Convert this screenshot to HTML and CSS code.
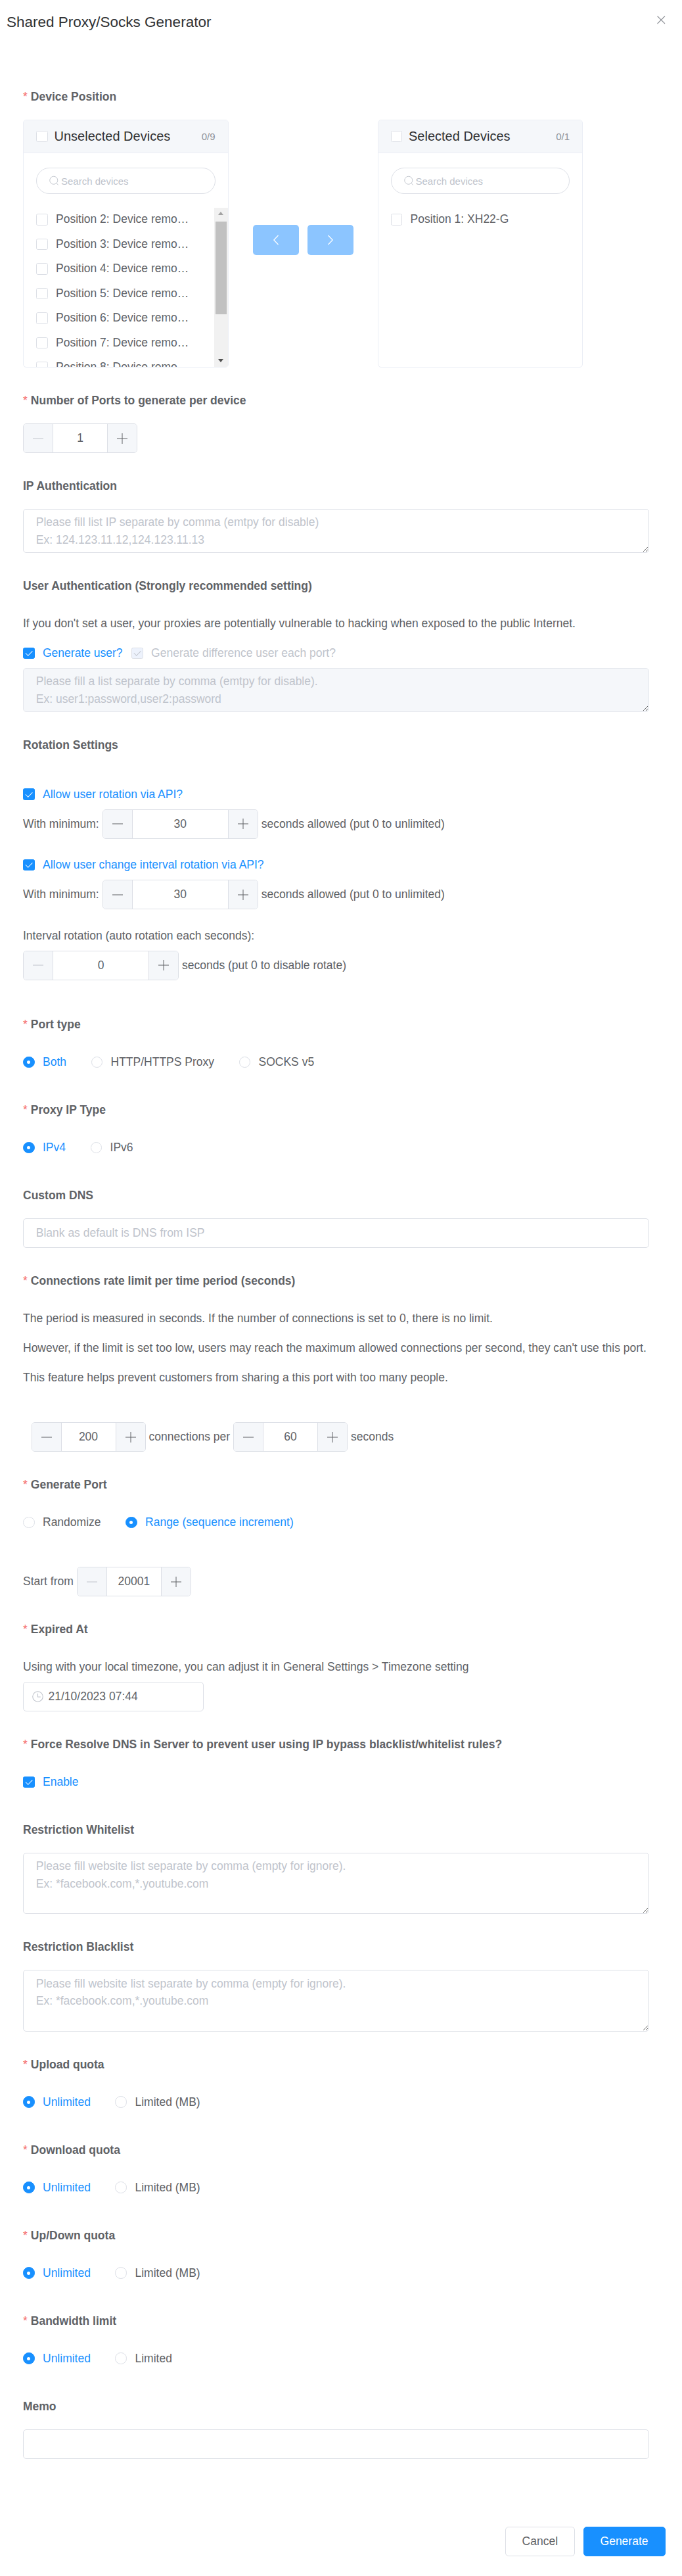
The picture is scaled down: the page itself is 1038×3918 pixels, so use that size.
FILE: index.html
```html
<!DOCTYPE html>
<html lang="en">
<head>
<meta charset="utf-8">
<title>Shared Proxy/Socks Generator</title>
<link rel="stylesheet" href="styles.css">
</head>
<body>
<div class="dialog">
  <header class="head">
    <h1 class="title">Shared Proxy/Socks Generator</h1>
    <svg class="close" viewBox="0 0 12.5 12.5"><path d="M.5.5l11.5 11.5M12 .5.5 12"/></svg>
  </header>
  <form class="form">
    <div class="item">
      <label class="lab req">Device Position</label>
      <div class="transfer">
        <div class="panel">
          <div class="p-head"><span class="cb"></span><span class="p-title">Unselected Devices</span><span class="p-count">0/9</span></div>
          <div class="search"><svg class="s-ico" viewBox="0 0 16 16"><circle cx="7.2" cy="7.2" r="6.4"/><path d="m12 12 2.6 3"/></svg><input placeholder="Search devices"></div>
          <div class="list">
            <div class="li"><span class="cb"></span><span class="li-t">Position 2: Device removed</span></div>
            <div class="li"><span class="cb"></span><span class="li-t">Position 3: Device removed</span></div>
            <div class="li"><span class="cb"></span><span class="li-t">Position 4: Device removed</span></div>
            <div class="li"><span class="cb"></span><span class="li-t">Position 5: Device removed</span></div>
            <div class="li"><span class="cb"></span><span class="li-t">Position 6: Device removed</span></div>
            <div class="li"><span class="cb"></span><span class="li-t">Position 7: Device removed</span></div>
            <div class="li"><span class="cb"></span><span class="li-t">Position 8: Device removed</span></div>
            <div class="sbar"><i class="up"></i><b class="thumb"></b><i class="down"></i></div>
          </div>
        </div>
        <div class="t-btns">
          <button type="button" class="t-btn"><svg viewBox="0 0 12 20"><path d="M9.5 3 2.8 10l6.7 7"/></svg></button>
          <button type="button" class="t-btn"><svg viewBox="0 0 12 20"><path d="M2.5 3 9.2 10l-6.7 7"/></svg></button>
        </div>
        <div class="panel">
          <div class="p-head"><span class="cb"></span><span class="p-title">Selected Devices</span><span class="p-count">0/1</span></div>
          <div class="search"><svg class="s-ico" viewBox="0 0 16 16"><circle cx="7.2" cy="7.2" r="6.4"/><path d="m12 12 2.6 3"/></svg><input placeholder="Search devices"></div>
          <div class="list">
            <div class="li"><span class="cb"></span><span class="li-t">Position 1: XH22-G</span></div>
          </div>
        </div>
      </div>
    </div>

    <div class="item">
      <label class="lab req">Number of Ports to generate per device</label>
      <div class="num"><span class="n-b off"><svg viewBox="0 0 16 16"><path d="M0 8h16"/></svg></span><input value="1"><span class="n-b"><svg viewBox="0 0 16 16"><path d="M0 8h16M8 0v16"/></svg></span></div>
    </div>

    <div class="item">
      <label class="lab">IP Authentication</label>
      <textarea rows="2" placeholder="Please fill list IP separate by comma (emtpy for disable)&#10;Ex: 124.123.11.12,124.123.11.13"></textarea>
    </div>

    <div class="item">
      <label class="lab">User Authentication (Strongly recommended setting)</label>
      <p class="line">If you don't set a user, your proxies are potentially vulnerable to hacking when exposed to the public Internet.</p>
      <div class="line row">
        <span class="opt on"><span class="cb on"></span>Generate user?</span>
        <span class="opt dis"><span class="cb dis"></span>Generate difference user each port?</span>
      </div>
      <textarea rows="2" disabled placeholder="Please fill a list separate by comma (emtpy for disable).&#10;Ex: user1:password,user2:password"></textarea>
    </div>

    <div class="item item-rot">
      <label class="lab">Rotation Settings</label>
      <div class="line row gap-a"><span class="opt on"><span class="cb on"></span>Allow user rotation via API?</span></div>
      <div class="line row tight">With minimum:
        <div class="num wide"><span class="n-b"><svg viewBox="0 0 16 16"><path d="M0 8h16"/></svg></span><input value="30"><span class="n-b"><svg viewBox="0 0 16 16"><path d="M0 8h16M8 0v16"/></svg></span></div>
        seconds allowed (put 0 to unlimited)</div>
      <div class="line row gap-a"><span class="opt on"><span class="cb on"></span>Allow user change interval rotation via API?</span></div>
      <div class="line row tight">With minimum:
        <div class="num wide"><span class="n-b"><svg viewBox="0 0 16 16"><path d="M0 8h16"/></svg></span><input value="30"><span class="n-b"><svg viewBox="0 0 16 16"><path d="M0 8h16M8 0v16"/></svg></span></div>
        seconds allowed (put 0 to unlimited)</div>
      <p class="line gap-a">Interval rotation (auto rotation each seconds):</p>
      <div class="line row tight">
        <div class="num wide"><span class="n-b off"><svg viewBox="0 0 16 16"><path d="M0 8h16"/></svg></span><input value="0"><span class="n-b"><svg viewBox="0 0 16 16"><path d="M0 8h16M8 0v16"/></svg></span></div>
        seconds (put 0 to disable rotate)</div>
    </div>

    <div class="item">
      <label class="lab req">Port type</label>
      <div class="line row radios">
        <span class="opt on"><span class="rd on"></span>Both</span>
        <span class="opt"><span class="rd"></span>HTTP/HTTPS Proxy</span>
        <span class="opt"><span class="rd"></span>SOCKS v5</span>
      </div>
    </div>

    <div class="item">
      <label class="lab req">Proxy IP Type</label>
      <div class="line row radios">
        <span class="opt on"><span class="rd on"></span>IPv4</span>
        <span class="opt"><span class="rd"></span>IPv6</span>
      </div>
    </div>

    <div class="item">
      <label class="lab">Custom DNS</label>
      <input class="txt" placeholder="Blank as default is DNS from ISP">
    </div>

    <div class="item">
      <label class="lab req">Connections rate limit per time period (seconds)</label>
      <p class="line">The period is measured in seconds. If the number of connections is set to 0, there is no limit.</p>
      <p class="line">However, if the limit is set too low, users may reach the maximum allowed connections per second, they can't use this port.</p>
      <p class="line">This feature helps prevent customers from sharing a this port with too many people.</p>
      <div class="line row tight conn">
        <div class="num"><span class="n-b"><svg viewBox="0 0 16 16"><path d="M0 8h16"/></svg></span><input value="200"><span class="n-b"><svg viewBox="0 0 16 16"><path d="M0 8h16M8 0v16"/></svg></span></div>
        connections per
        <div class="num"><span class="n-b"><svg viewBox="0 0 16 16"><path d="M0 8h16"/></svg></span><input value="60"><span class="n-b"><svg viewBox="0 0 16 16"><path d="M0 8h16M8 0v16"/></svg></span></div>
        seconds
      </div>
    </div>

    <div class="item">
      <label class="lab req">Generate Port</label>
      <div class="line row radios">
        <span class="opt"><span class="rd"></span>Randomize</span>
        <span class="opt on"><span class="rd on"></span>Range (sequence increment)</span>
      </div>
      <div class="line row tight start">Start from
        <div class="num"><span class="n-b off"><svg viewBox="0 0 16 16"><path d="M0 8h16"/></svg></span><input value="20001"><span class="n-b"><svg viewBox="0 0 16 16"><path d="M0 8h16M8 0v16"/></svg></span></div>
      </div>
    </div>

    <div class="item">
      <label class="lab req">Expired At</label>
      <p class="line">Using with your local timezone, you can adjust it in General Settings &gt; Timezone setting</p>
      <div class="date"><svg viewBox="0 0 16 16"><circle cx="8" cy="8" r="7.3"/><path d="M8 3.5V8.5H12"/></svg><input value="21/10/2023 07:44"></div>
    </div>

    <div class="item">
      <label class="lab req">Force Resolve DNS in Server to prevent user using IP bypass blacklist/whitelist rules?</label>
      <div class="line row"><span class="opt on"><span class="cb on"></span>Enable</span></div>
    </div>

    <div class="item">
      <label class="lab">Restriction Whitelist</label>
      <textarea rows="3" placeholder="Please fill website list separate by comma (empty for ignore).&#10;Ex: *facebook.com,*.youtube.com"></textarea>
    </div>

    <div class="item">
      <label class="lab">Restriction Blacklist</label>
      <textarea rows="3" placeholder="Please fill website list separate by comma (empty for ignore).&#10;Ex: *facebook.com,*.youtube.com"></textarea>
    </div>

    <div class="item">
      <label class="lab req">Upload quota</label>
      <div class="line row radios"><span class="opt on"><span class="rd on"></span>Unlimited</span><span class="opt"><span class="rd"></span>Limited (MB)</span></div>
    </div>
    <div class="item">
      <label class="lab req">Download quota</label>
      <div class="line row radios"><span class="opt on"><span class="rd on"></span>Unlimited</span><span class="opt"><span class="rd"></span>Limited (MB)</span></div>
    </div>
    <div class="item">
      <label class="lab req">Up/Down quota</label>
      <div class="line row radios"><span class="opt on"><span class="rd on"></span>Unlimited</span><span class="opt"><span class="rd"></span>Limited (MB)</span></div>
    </div>
    <div class="item">
      <label class="lab req">Bandwidth limit</label>
      <div class="line row radios"><span class="opt on"><span class="rd on"></span>Unlimited</span><span class="opt"><span class="rd"></span>Limited</span></div>
    </div>
    <div class="item">
      <label class="lab">Memo</label>
      <input class="txt">
    </div>
  </form>
  <footer class="foot">
    <button type="button" class="btn">Cancel</button>
    <button type="button" class="btn primary">Generate</button>
  </footer>
</div>
</body>
</html>
```

FILE: styles.css
```css
* { box-sizing: border-box; }
html, body { margin: 0; padding: 0; background: #fff; }
body { font-family: "Liberation Sans", Arial, sans-serif; font-size: 17.5px; color: #606266; }
.dialog { width: 1038px; }
input, textarea, button { font-family: inherit; font-size: inherit; color: inherit; }
input::placeholder, textarea::placeholder { color: #c0c4cc; opacity: 1; }

.head { position: relative; height: 122px; padding: 19px 0 0 10px; }
.title { margin: 0; font-size: 22.5px; line-height: 30px; font-weight: 400; color: #303133; }
.close { position: absolute; left: 1000px; top: 24px; width: 12.5px; height: 12.5px; fill: none; stroke: #909399; stroke-width: 1.1; }

.form { padding: 0 50px 0 35px; }
.item { margin-bottom: 25px; }
.item-rot { margin-bottom: 42.5px; }
.lab { display: block; height: 60px; line-height: 50px; padding-bottom: 10px; font-weight: 700; }
.req::before { content: "*"; color: #f56c6c; margin-right: 5px; font-weight: 400; }
.line { margin: 0; height: 45px; line-height: 45px; }
.row { display: flex; align-items: center; }
.tight { gap: 5px; }
.gap-a { margin-top: 17.5px; }
.conn { margin-top: 45px; padding-left: 12.5px; }
.start { margin-top: 45px; }
.radios { gap: 37.5px; }

.opt { display: inline-flex; align-items: center; margin-right: 13.5px; }
.radios .opt { margin-right: 0; }
.opt.on { color: #1890ff; }
.opt.dis { color: #c0c4cc; }

.cb { display: inline-block; position: relative; flex: none; width: 17.5px; height: 17.5px; border: 1px solid #dcdfe6; border-radius: 2.5px; background: #fff; }
.opt .cb, .opt .rd { margin-right: 12.5px; }
.cb.on { background: #1890ff; border-color: #1890ff; }
.cb.on::after, .cb.dis::after { content: ""; position: absolute; left: 5.2px; top: 1.4px; width: 4.6px; height: 9.4px; border: solid #fff; border-width: 0 1.2px 1.2px 0; transform: rotate(45deg); }
.cb.dis { background: #edf2fc; }
.cb.dis::after { border-color: #c0c4cc; }
.rd { display: inline-block; position: relative; flex: none; width: 17.5px; height: 17.5px; border: 1px solid #dcdfe6; border-radius: 50%; background: #fff; }
.rd.on { background: #1890ff; border-color: #1890ff; }
.rd.on::after { content: ""; position: absolute; left: 50%; top: 50%; width: 5px; height: 5px; margin: -2.5px 0 0 -2.5px; border-radius: 50%; background: #fff; }

.transfer { display: flex; align-items: flex-start; margin-bottom: 1px; }
.panel { width: 312.5px; height: 377px; border: 1px solid #ebeef5; border-radius: 5px; overflow: hidden; background: #fff; }
.p-head { display: flex; align-items: center; height: 50px; padding: 0 19px; background: #f5f7fa; border-bottom: 1px solid #ebeef5; }
.p-title { margin-left: 10px; font-size: 20px; color: #303133; }
.p-count { margin-left: auto; font-size: 15px; color: #909399; }
.search { position: relative; height: 40px; margin: 22px 19px 21px; }
.search input { width: 100%; height: 40px; padding: 0 12px 0 37px; border: 1px solid #dcdfe6; border-radius: 20px; font-size: 15px; outline: 0; }
.s-ico { position: absolute; left: 20px; top: 12px; width: 15px; height: 16px; fill: none; stroke: #c0c4cc; stroke-width: 1; }
.list { position: relative; height: 244px; overflow: hidden; }
.li { display: flex; align-items: center; height: 37.5px; padding-left: 19px; margin-top: -1px; margin-bottom: 1px; }
.li-t { width: 206px; margin-left: 12.5px; white-space: nowrap; overflow: hidden; text-overflow: ellipsis; }
.sbar { position: absolute; right: 0; top: 0; bottom: 0; width: 21px; background: #f1f1f1; }
.thumb { position: absolute; left: 2px; right: 2px; top: 21px; height: 141px; background: #c1c1c1; }
.up, .down { position: absolute; left: 6px; width: 0; height: 0; border: 4.5px solid transparent; }
.up { top: 6px; border-bottom: 5px solid #a3a3a3; border-top: 0; }
.down { bottom: 9px; border-top: 5px solid #505050; border-bottom: 0; }
.t-btns { display: flex; gap: 12.5px; margin: 160px 37px 0 37.5px; }
.t-btn { width: 70px; height: 46px; padding: 0; border: 0; border-radius: 5px; background: #8cc5ff; display: flex; align-items: center; justify-content: center; }
.t-btn svg { width: 12px; height: 20px; fill: none; stroke: #fff; stroke-width: 1.2; }

.num { display: flex; flex: none; width: 174px; height: 45px; border: 1px solid #dcdfe6; border-radius: 5px; overflow: hidden; background: #fff; }
.num.wide { width: 237px; }
.num input { flex: 1; min-width: 0; height: 100%; border: 0; padding: 0; text-align: center; outline: 0; background: #fff; }
.n-b { flex: none; width: 45px; display: flex; align-items: center; justify-content: center; background: #f5f7fa; }
.n-b:first-child { border-right: 1px solid #dcdfe6; }
.n-b:last-child { border-left: 1px solid #dcdfe6; }
.n-b svg { width: 16px; height: 16px; fill: none; stroke: #606266; stroke-width: 1; }
.n-b.off svg { stroke: #c0c4cc; }

textarea { display: block; width: 100%; padding: 6.25px 18.75px; border: 1px solid #dcdfe6; border-radius: 5px; line-height: 26.25px; outline: 0; background: #fff; }
textarea:disabled { background: #f5f7fa; border-color: #e4e7ed; }
.txt { display: block; width: 100%; height: 45px; padding: 0 18.75px; border: 1px solid #dcdfe6; border-radius: 5px; outline: 0; }

.date { position: relative; width: 275px; height: 45px; }
.date input { width: 100%; height: 100%; padding: 0 19px 0 37.5px; border: 1px solid #dcdfe6; border-radius: 5px; outline: 0; }
.date svg { position: absolute; left: 14px; top: 14px; width: 17px; height: 17px; fill: none; stroke: #c0c4cc; stroke-width: 1; }

.foot { display: flex; justify-content: flex-end; gap: 12.5px; margin-top: 103px; padding: 0 25.5px 30px 0; }
.btn { height: 45px; padding: 0 25px; border: 1px solid #dcdfe6; border-radius: 5px; background: #fff; color: #606266; }
.btn.primary { background: #1890ff; border-color: #1890ff; color: #fff; }
```
